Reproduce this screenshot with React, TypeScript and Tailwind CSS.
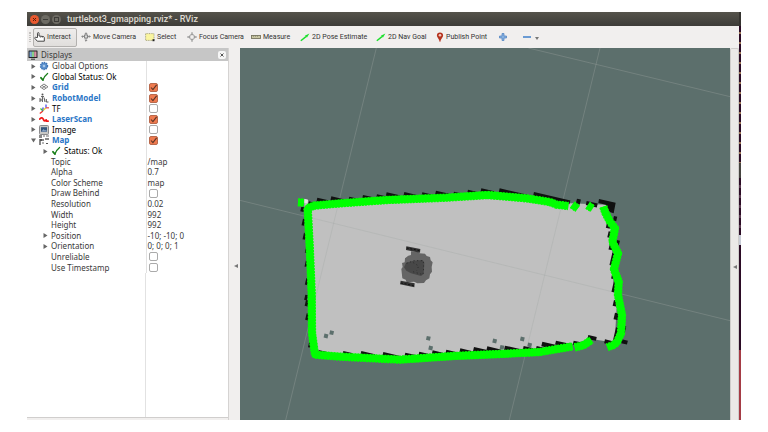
import type { ReactNode } from 'react'

type Row = {
  name: string
  icon?: ReactNode
  arrow?: 'right' | 'down'
  child?: boolean
  link?: boolean
  muted?: boolean
  checked?: boolean
  value?: string
}

const GearIcon = () => (
  <svg viewBox="0 0 10 10" className="size-[10px]">
    <circle cx="5" cy="5" r="3.4" fill="#5e93cf" stroke="#3f74b5" strokeWidth="1.6" strokeDasharray="1.4 .8" />
    <circle cx="5" cy="5" r="1.2" fill="#a9c8ea" />
  </svg>
)

const OkIcon = () => (
  <svg viewBox="0 0 10 10" className="size-[10px]" fill="none" stroke="#177d17" strokeLinecap="round">
    <path d="M2 5.8 3.9 8" strokeWidth="1.8" />
    <path d="M3.9 8C5 5 6.4 3.2 8.6 1.5" strokeWidth="1.3" />
  </svg>
)

const GridIcon = () => (
  <svg viewBox="0 0 10 10" className="size-[10px]" fill="none" stroke="#777" strokeWidth=".9">
    <path d="M5 2 9 4.800 5 7.600 1 4.800zM3 3.400l4 2.800M7 3.400l-4 2.800" />
  </svg>
)

const RobotIcon = () => (
  <svg viewBox="0 0 10 10" className="size-[10px]" fill="none" stroke="#444">
    <circle cx="3.5" cy="1.5" r="1" fill="#555" stroke="none" />
    <path d="M1 5v4M1 7h2M3.400 4v5M5 4.500 6 9M7.300 6v3h2.200" strokeWidth=".9" />
    <path d="M2 3.500h3" strokeWidth=".8" />
  </svg>
)

const TfIcon = () => (
  <svg viewBox="0 0 10 10" className="size-[10px]" fill="none" strokeWidth="1.300">
    <path d="M.8 9.500 4 7" stroke="#f03030" />
    <path d="M4 7 1.500 4.500" stroke="#38c038" />
    <path d="M4 7V3.500" stroke="#3838f0" />
    <path d="M4 6.500 7 3.800" stroke="#d8d030" />
    <path d="M7 3.800V.5" stroke="#5050f0" />
    <path d="M7 3.800h3" stroke="#f05050" />
  </svg>
)

const LaserIcon = () => (
  <svg viewBox="0 0 10 10" className="size-[10px]" fill="none" stroke="#f01414" strokeWidth="1.7" strokeLinecap="round">
    <path d="M.8 5c1-1.500 2.400-1.500 3-.6.8 1.200 1 2.500 2 2.500.8 0 .7-1 1.500-1M7.800 7.200h1.400" />
  </svg>
)

const ImageIcon = () => (
  <svg viewBox="0 0 10 10" className="size-[10px]">
    <rect x=".5" y=".5" width="9" height="9" rx="1" fill="#c8c8c6" stroke="#8a8a8c" />
    <rect x="2" y="2.200" width="6" height="4.600" fill="#35557c" />
    <path d="M2.500 6.500 4.500 4l1.500 1.500 1-.8 1 1.800z" fill="#89a4c4" />
  </svg>
)

const MapIcon = () => (
  <svg viewBox="0 0 10 10" className="size-[10px]">
    <path fill="#888" d="M0 0h3v3H0zM0 4h2v6H0zM3 4h2v2H3zM6 3h4v2H6z" />
    <path fill="#b5b5b5" d="M4 0h2v2H4zM7 0h3v2H7zM3 7h2v2H3z" />
    <path fill="#555" d="M1 4h2v2H1zM7 8h2v1H7z" />
  </svg>
)

const rows: Row[] = [
  { name: 'Global Options', icon: <GearIcon />, arrow: 'right', muted: true },
  { name: 'Global Status: Ok', icon: <OkIcon />, arrow: 'right' },
  { name: 'Grid', icon: <GridIcon />, arrow: 'right', link: true, checked: true },
  { name: 'RobotModel', icon: <RobotIcon />, arrow: 'right', link: true, checked: true },
  { name: 'TF', icon: <TfIcon />, arrow: 'right', checked: false },
  { name: 'LaserScan', icon: <LaserIcon />, arrow: 'right', link: true, checked: true },
  { name: 'Image', icon: <ImageIcon />, arrow: 'right', checked: false },
  { name: 'Map', icon: <MapIcon />, arrow: 'down', link: true, checked: true },
  { name: 'Status: Ok', icon: <OkIcon />, arrow: 'right', child: true },
  { name: 'Topic', child: true, muted: true, value: '/map' },
  { name: 'Alpha', child: true, muted: true, value: '0.7' },
  { name: 'Color Scheme', child: true, muted: true, value: 'map' },
  { name: 'Draw Behind', child: true, muted: true, checked: false },
  { name: 'Resolution', child: true, muted: true, value: '0.02' },
  { name: 'Width', child: true, muted: true, value: '992' },
  { name: 'Height', child: true, muted: true, value: '992' },
  { name: 'Position', child: true, muted: true, arrow: 'right', value: '-10; -10; 0' },
  { name: 'Orientation', child: true, muted: true, arrow: 'right', value: '0; 0; 0; 1' },
  { name: 'Unreliable', child: true, muted: true, checked: false },
  { name: 'Use Timestamp', child: true, muted: true, checked: false },
]

const MoveIcon = () => (
  <svg viewBox="0 0 10 10" className="size-[10px] shrink-0" fill="none" stroke="#777" strokeWidth=".8">
    <path d="M5 .8v8.400M.8 4.500h8.400M3.800 2 5 .8 6.200 2M3.800 8 5 9.200 6.200 8M2 3.300.8 4.500 2 5.700M8 3.300l1.200 1.200L8 5.700" />
    <rect x="3.400" y="3" width="3.200" height="3" fill="#ddd" />
  </svg>
)

const FocusIcon = () => (
  <svg viewBox="0 0 10 10" className="size-[10px] shrink-0" fill="none" stroke="#999" strokeWidth=".9">
    <circle cx="5" cy="5" r="2.600" />
    <path d="M5 .3v3M5 6.700v3M.3 5h3M6.700 5h3" strokeWidth="1.300" />
  </svg>
)

const HandIcon = () => (
  <svg viewBox="0 0 11 10" className="h-[10px] w-[11px] shrink-0">
    <path
      d="M3.500 5.500V1.300c0-1 1.500-1 1.500 0V4l4 .5c1 .1 1.300.6 1.300 1.300v3.400h-7L.8 6.300c-.4-.8.7-1.400 1.300-.8z"
      fill="#fff"
      stroke="#333"
      strokeWidth=".9"
    />
    <path d="M6.400 4.500v1.300M8.300 4.700v1.200" stroke="#555" strokeWidth=".6" />
  </svg>
)

const SelectIcon = () => (
  <svg viewBox="0 0 10 10" className="size-[10px] shrink-0">
    <rect x=".6" y="1.600" width="8.400" height="6.800" fill="#faf5a0" stroke="#8a8660" strokeWidth=".7" strokeDasharray="1 .7" />
    <path d="M7.500 7.200h2v2h-2z" fill="#222" />
  </svg>
)

const RulerIcon = () => (
  <svg viewBox="0 0 10 10" className="size-[10px] shrink-0">
    <rect x=".5" y="3.500" width="9" height="3" fill="#c9c7a4" stroke="#77755f" strokeWidth=".9" />
    <path d="M2.500 3.500V5M4.500 3.500V5M6.500 3.500V5" stroke="#77755f" strokeWidth=".5" />
  </svg>
)

const ArrowIcon = () => (
  <svg viewBox="0 0 10 10" className="size-[10px] shrink-0">
    <path d="M.8 8.800 6 4.600" stroke="#19e02a" strokeWidth="1.400" />
    <path d="M9.400 1.400 7 5.400 4.800 3.800z" fill="#19e02a" />
  </svg>
)

const PinIcon = () => (
  <svg viewBox="0 0 8 10" className="h-[10px] w-[8px] shrink-0">
    <path d="M4 .4c2 0 3.100 1.300 3.100 3C7.100 5.400 4.800 6.400 4.400 9.700h-.8C3.200 6.400.9 5.400.9 3.400.9 1.700 2 .4 4 .4z" fill="#b5331f" />
    <circle cx="4" cy="3.200" r="1.300" fill="#f3c8be" />
  </svg>
)

const tools = [
  { label: 'Move Camera', icon: <MoveIcon />, width: 'w-[64px]' },
  { label: 'Select', icon: <SelectIcon />, width: 'w-[42px]' },
  { label: 'Focus Camera', icon: <FocusIcon />, width: 'w-[64px]' },
  { label: 'Measure', icon: <RulerIcon />, width: 'w-[49px]' },
  { label: '2D Pose Estimate', icon: <ArrowIcon />, width: 'w-[76px]' },
  { label: '2D Nav Goal', icon: <ArrowIcon />, width: 'w-[60px]' },
  { label: 'Publish Point', icon: <PinIcon />, width: 'w-[63px]' },
]

function TitleBar() {
  return (
    <header className="flex h-[14px] shrink-0 items-center bg-linear-to-b from-[#55534b] to-[#3d3c38] pl-[3px]">
      <div className="flex gap-[2px]">
        <button aria-label="Close window" className="grid size-[9px] place-items-center rounded-full bg-[#e9592f]">
          <svg viewBox="0 0 5 5" className="size-[5px]" stroke="#5b1e0c">
            <path d="m1 1 3 3M4 1 1 4" />
          </svg>
        </button>
        <button aria-label="Minimize window" className="grid size-[9px] place-items-center rounded-full bg-[#6d6b63]">
          <span className="h-px w-[5px] bg-[#3d3c38]" />
        </button>
        <button aria-label="Maximize window" className="grid size-[9px] place-items-center rounded-full bg-[#6d6b63]">
          <span className="size-[5px] border border-[#3d3c38]" />
        </button>
      </div>
      <h1 className="ml-[6px] font-['Roboto',sans-serif] text-[9px] leading-[12px] font-medium whitespace-nowrap text-[#dfdbd2]">
        turtlebot3_gmapping.rviz* - RViz
      </h1>
    </header>
  )
}

function Toolbar() {
  return (
    <nav
      aria-label="Tools"
      className="flex h-[22px] shrink-0 items-center bg-[#f1efee] font-['Roboto',sans-serif] text-[7px] text-[#333]"
    >
      <span className="mx-[2px] h-[10px] w-[2px] border-x border-dotted border-[#c4c2c0]" />
      <button className="flex h-[19px] w-[44px] items-center gap-[2px] rounded-[2px] border border-[#b3b1af] bg-linear-to-b from-[#efedec] to-[#e0dedc] whitespace-nowrap">
        <HandIcon />
        Interact
      </button>
      <div className="flex items-center pl-[4px]">
        {tools.map((t) => (
          <button key={t.label} className={`flex shrink-0 items-center gap-[2px] whitespace-nowrap ${t.width}`}>
            {t.icon}
            {t.label}
          </button>
        ))}
        <button aria-label="Add tool" className="w-[24px]">
          <svg viewBox="0 0 8 8" className="size-[8px]">
            <path d="M3 .5h2V3h2.500v2H5v2.500H3V5H.5V3H3z" fill="#86b0df" stroke="#4a7fbe" strokeWidth=".7" />
          </svg>
        </button>
        <button aria-label="Remove tool" className="flex items-center gap-[4px]">
          <span className="h-[2px] w-[8px] bg-[#6b9bd3]" />
          <svg viewBox="0 0 4 3" className="mt-[2px] h-[3px] w-[4px]">
            <path d="M0 0h4L2 3z" fill="#777" />
          </svg>
        </button>
      </div>
    </nav>
  )
}

function TreeArrow({ dir }: { dir: 'right' | 'down' }) {
  return (
    <svg viewBox="0 0 5 5" className="size-[5px]">
      <path d={dir === 'right' ? 'M.5 0 4.500 2.500.5 5z' : 'M0 .5h5L2.500 4.500z'} fill="#666" />
    </svg>
  )
}

function CheckBox({ label, checked }: { label: string; checked: boolean }) {
  return (
    <span className="ml-px grid size-[9px]">
      <input
        type="checkbox"
        aria-label={label}
        defaultChecked={checked}
        className="peer col-start-1 row-start-1 size-[9px] appearance-none rounded-[2px] border border-[#aaa] bg-white checked:border-[#b9694c] checked:bg-[#ee7a4f]"
      />
      <svg viewBox="0 0 9 9" className="pointer-events-none invisible col-start-1 row-start-1 size-[9px] peer-checked:visible" fill="none" stroke="#5a3526">
        <path d="M2 4.500 3.900 6.600 7.600 1.800" strokeWidth="1.100" />
      </svg>
    </span>
  )
}

function TreeRow({ row }: { row: Row }) {
  const tone = row.link ? 'font-bold text-[#2a76c6]' : row.muted ? 'text-[#3a3a3a]' : 'text-black'
  return (
    <tr>
      <th scope="row" className="border-r border-[#e2e2e2] p-0 font-normal">
        <div className={`flex h-[10px] items-center ${row.child ? 'pl-[15px]' : 'pl-[3px]'}`}>
          <span className="flex w-[9px] shrink-0 pl-px">
            {row.arrow && (
              <button aria-label={`Toggle ${row.name}`}>
                <TreeArrow dir={row.arrow} />
              </button>
            )}
          </span>
          {row.icon && <span className="mr-[3px] shrink-0">{row.icon}</span>}
          <span className={`whitespace-nowrap ${tone}`}>{row.name}</span>
        </div>
      </th>
      <td className="p-0 pl-px whitespace-nowrap text-[#3a3a3a]">
        {row.checked !== undefined ? <CheckBox label={row.name} checked={row.checked} /> : row.value}
      </td>
    </tr>
  )
}

function DisplaysPanel() {
  return (
    <aside className="flex w-[202px] shrink-0 flex-col border-r border-[#d5d3d2] bg-white">
      <div className="flex h-[13px] items-center bg-[#c6c6c6] pr-[2px] pl-px">
        <svg viewBox="0 0 10 10" className="size-[10px]">
          <rect x=".5" y=".5" width="9" height="7.500" rx=".6" fill="#222" />
          <path d="M1.500 1.500h2.400v5.500H1.500z" fill="#7ba6dd" />
          <path d="M3.900 1.500h2.300v5.500H3.900z" fill="#86cf8a" />
          <path d="M6.200 1.500h2.300v5.500H6.200z" fill="#d990a8" />
          <path d="M3 8.700h4v1H3z" fill="#333" />
        </svg>
        <h2 className="ml-[3px] text-[8px] leading-[12px] text-[#3a3a3a]">Displays</h2>
        <button aria-label="Close Displays" className="ml-auto grid size-[8px] place-items-center rounded-[2px] bg-[#f6f6f6]">
          <svg viewBox="0 0 4 4" className="size-[4px]" stroke="#555">
            <path d="m.5.5 3 3M3.500.5l-3 3" />
          </svg>
        </button>
      </div>
      <table className="h-[212px] w-full table-fixed border-collapse text-left text-[8px] leading-[10px]">
        <colgroup>
          <col className="w-[119px]" />
          <col />
        </colgroup>
        <tbody>
          {rows.map((r) => (
            <TreeRow key={r.name} row={r} />
          ))}
        </tbody>
      </table>
      <div className="flex-1">
        <div className="h-full w-[119px] border-r border-[#e2e2e2]" />
      </div>
      <div className="h-[3px] border-t border-[#d0cecd] bg-[#f1efee]" />
    </aside>
  )
}

// occupied cells as [x, y, width, height], turned to the map's heading
const walls = [
  [206, 484, 16, 12], [232, 473, 34, 14], [274, 469, 38, 14], [328, 470, 30, 12], [369, 465, 28, 12],
  [411, 463, 30, 12], [440, 457, 40, 14], [493, 456, 42, 14], [547, 457, 36, 14], [588, 452, 48, 14],
  [642, 455, 32, 12], [684, 449, 40, 14], [724, 445, 40, 14], [779, 445, 86, 12], [882, 456, 112, 12],
  [1011, 476, 12, 16], [1040, 483, 34, 12],
  [184, 500, 10, 14], [189, 536, 8, 20], [192, 578, 8, 20], [198, 622, 8, 16], [198, 660, 8, 20],
  [199, 714, 9, 20], [196, 764, 8, 16], [198, 780, 9, 18], [200, 820, 9, 20], [208, 866, 8, 12], [208, 904, 9, 18],
  [222, 770, 4, 10],
  [236, 930, 36, 14], [310, 933, 30, 12], [364, 933, 42, 12], [430, 936, 52, 12], [496, 938, 32, 12],
  [538, 935, 40, 12], [578, 931, 34, 14], [619, 929, 40, 12], [661, 925, 44, 14], [702, 921, 44, 14],
  [742, 919, 44, 14], [795, 917, 56, 14], [851, 918, 30, 14], [890, 918, 26, 12], [907, 905, 44, 14], [948, 902, 46, 12],
  [1001, 902, 22, 12], [1045, 885, 26, 12], [1095, 898, 24, 12], [1146, 898, 18, 12],
  [1122, 528, 10, 14], [1102, 544, 12, 20], [1106, 574, 10, 18], [1130, 600, 10, 14], [1111, 605, 12, 24],
  [1117, 638, 10, 38], [1116, 704, 10, 12], [1122, 722, 9, 34], [1122, 780, 10, 18], [1125, 818, 12, 20],
  [1128, 862, 10, 40], [1151, 858, 8, 24],
]

const unknownCells = [
  [258, 888], [275, 878], [565, 895], [572, 924], [764, 903], [786, 922], [847, 897], [869, 915],
]

const scans = [
  '203,512 204,504 222,497 300,490 440,480 620,473 742,465 860,475 930,486 950,494 985,498',
  '203,505 209,620 215,760 216,880 225,944 300,950 480,959 640,948 780,942 900,936 998,919',
  '1004,922 1030,916 1054,900',
  '1090,500 1096,518 1110,545 1125,565 1117,605 1134,640 1122,688 1136,725 1134,765 1146,825 1143,880 1130,908 1118,916 1102,922',
  '174,487 192,488',
  '997,494 1013,506',
  '1043,496 1058,506',
]

function MapView() {
  return (
    <svg
      role="img"
      aria-label="Map view"
      viewBox="0 0 1470 1116"
      preserveAspectRatio="xMidYMid slice"
      className="h-full w-full"
    >
      <g transform="translate(0 -24)" fill="none">
        <path
          fill="#c0c0c0"
          d="M192 476 204 480 208 490 440 474 742 460 860 470 990 490 1100 494 1112 540 1116 620 1120 720 1130 800 1124 908 1050 896 1000 912 860 930 480 950 230 940 212 800z"
        />
        <path stroke="#a3a8a6" strokeOpacity=".5" strokeWidth="2" d="M409 24 137 1140M1080 24 808 1140M0 481l1470 361M865 24l605 146" />
        <g fill="#101010">
          {walls.map(([x, y, w, h]) => (
            <rect key={`${x}-${y}`} x={x} y={y} width={w} height={h} transform={`rotate(13 ${x} ${y})`} />
          ))}
          <path d="M1077 477l50 11-6 32-12-4-12-22-22-5z" />
        </g>
        <g fill="#5c6f6c">
          {unknownCells.map(([x, y]) => (
            <rect key={x} x={x - 6} y={y - 6} width="12" height="12" transform={`rotate(13 ${x} ${y})`} />
          ))}
        </g>
        <g stroke="#0f0" strokeLinejoin="round">
          {scans.map((points) => (
            <g key={points}>
              <polyline points={points} strokeWidth="22" />
              <polyline points={points} strokeWidth="25" strokeDasharray="6 3" />
            </g>
          ))}
        </g>
        <path fill="#e4e4e4" d="M194 477l10 2-2 11-9-2z" />
        <g>
          <path
            fill="#656565"
            d="M513 634l22 2 4 4 16 1 5 7 10 3 2 10 6 6-3 14 1 14-6 8-2 12-10 6-6 8-20 1-10-5-22 2-3-8-10-4-3-28 4-6-2-12 8-2 1-12 10-8 8-2z"
          />
          <path fill="#484848" d="M492 682l6-14 22-6 28-2 5 8-2 34-8 6-30-8-14-8z" />
          <path stroke="#2a2a2a" strokeWidth="3" strokeDasharray="3 8" d="M500 670l22-8 28 0 1 22-2 20-34-10M520 668l16 10-6 14" />
          <path fill="#333" d="M499 619l42 8-1 11-42-8zM482 722l42 8-1 12-43-9z" />
          <path stroke="#111" strokeWidth="3" strokeDasharray="6 5" d="M500 624l40 8M483 729l39 8" />
        </g>
      </g>
    </svg>
  )
}

function SideHandle() {
  return (
    <svg viewBox="0 0 4 4" className="size-[4px]">
      <path d="M4 0v4L0 2z" fill="#777" />
    </svg>
  )
}

// slice of the desktop that shows past the window's right edge
function DesktopEdge() {
  return (
    <div className="flex w-[2px] shrink-0 flex-col bg-[#2b0b25]">
      <div className="h-[14px] bg-[#35332f]" />
      <div className="h-[137px] bg-[repeating-linear-gradient(#2b0b25_0_6px,#9a7454_6px_8px,#2b0b25_8px_10px)]" />
      <div className="h-[15px] bg-[#46443f]" />
      <div className="h-[57px] bg-[repeating-linear-gradient(#2b0b25_0_7px,#5d3b52_7px_10px)]" />
      <div className="h-[10px] bg-[#c8ccd6]" />
      <div className="h-[105px]" />
      <div className="flex-1 bg-[#a53b45]" />
    </div>
  )
}

export default function App() {
  return (
    <div className="flex min-h-screen flex-col bg-white px-[27px] py-3 font-['Noto_Sans',sans-serif]">
      <div className="flex flex-1">
        <div className="flex min-w-0 flex-1 flex-col bg-[#f1efee]">
          <TitleBar />
          <Toolbar />
          <div className="flex flex-1">
            <DisplaysPanel />
            <button aria-label="Toggle left panel" className="flex w-[11px] items-center justify-center border-b border-[#f1efee] pt-[64px] pl-[2px]">
              <SideHandle />
            </button>
            <main className="h-[372px] min-w-0 flex-1 bg-[#5c6f6c]">
              <MapView />
            </main>
            <button
              aria-label="Toggle right panel"
              className="flex w-[9px] items-center justify-center rounded-t-[2px] border-x border-t border-[#cfcdcb] bg-[#ebe9e7] pt-[64px]"
            >
              <SideHandle />
            </button>
          </div>
        </div>
        <DesktopEdge />
      </div>
    </div>
  )
}
